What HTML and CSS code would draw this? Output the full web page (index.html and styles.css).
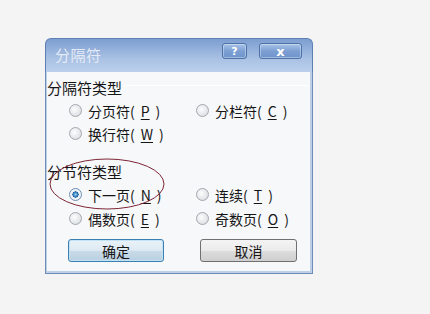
FILE: index.html
```html
<!DOCTYPE html>
<html lang="zh-CN">
<head>
    <meta charset="UTF-8">
    <title>分隔符</title>
    <link rel="stylesheet" href="styles.css">
</head>
<body>
    <div class="dialog">
        <div class="titlebar">
            <span class="title">分隔符</span>
            <div class="caption-buttons">
                <button class="cap-btn help">?</button>
                <button class="cap-btn close">x</button>
            </div>
        </div>

        <div class="dialog-body">
            <div class="group-title">
                <span>分隔符类型</span>
                <div class="group-line"></div>
            </div>
            <div class="radio-grid">
                <label class="radio"><span class="dot"></span>分页符(<u>P</u>)</label>
                <label class="radio"><span class="dot"></span>分栏符(<u>C</u>)</label>
                <label class="radio"><span class="dot"></span>换行符(<u>W</u>)</label>
            </div>

            <div class="group-title second">
                <span>分节符类型</span>
            </div>
            <div class="radio-grid tall">
                <label class="radio"><span class="dot checked"></span>下一页(<u>N</u>)</label>
                <label class="radio"><span class="dot"></span>连续(<u>T</u>)</label>
                <label class="radio"><span class="dot"></span>偶数页(<u>E</u>)</label>
                <label class="radio"><span class="dot"></span>奇数页(<u>O</u>)</label>
            </div>

            <div class="actions">
                <button class="btn default">确定</button>
                <button class="btn">取消</button>
            </div>

            <!-- hand-drawn annotation -->
            <svg class="mark" width="120" height="56" viewBox="0 0 120 56">
                <ellipse cx="60" cy="27" rx="57" ry="25" fill="none" stroke="#7e2636" stroke-width="1"/>
            </svg>
        </div>
    </div>
</body>
</html>
```

FILE: styles.css
```css
* {
    margin: 0;
    padding: 0;
    box-sizing: border-box;
}

body {
    font-family: "Noto Sans CJK SC", "Noto Sans", sans-serif;
    font-size: 14px;
    background: #f4f4f4;
    color: #151515;
    overflow: hidden;
}

.dialog {
    width: 268px;
    margin: 38px 0 0 45px;
}

.titlebar {
    height: 34px;
    display: flex;
    justify-content: space-between;
    align-items: flex-start;
    padding: 0 10px 0 9px;
    border: 1px solid #5d7fb3;
    border-bottom: none;
    border-radius: 6px 6px 0 0;
    background: linear-gradient(#7d9ed1, #a9c1e4 60%, #bcd0ec);
}

.title {
    color: #e4ebf6;
    font-size: 15px;
    line-height: 20px;
    margin-top: 6px;
    letter-spacing: 0.5px;
}

.caption-buttons {
    display: flex;
    gap: 12px;
    margin-top: 4px;
}

.cap-btn {
    height: 16px;
    border: 1px solid #4d72a8;
    border-radius: 3px;
    background: linear-gradient(#a9c3e8, #7c9fd3 50%, #6f94cc);
    color: #fff;
    font-family: "DejaVu Sans", sans-serif;
    font-weight: bold;
    font-size: 11px;
    line-height: 13px;
    box-shadow: inset 0 0 0 1px rgba(255, 255, 255, 0.35);
}

.cap-btn.help {
    width: 25px;
}

.cap-btn.close {
    width: 43px;
    font-size: 13px;
}

.dialog-body {
    position: relative;
    height: 202px;
    background: #f7f8fa;
    border: 1px solid #6d8db8;
    border-top: none;
    box-shadow: inset 1px 0 0 #bed0e8, inset -2px 0 0 #bed0e8, inset 0 -2px 0 #bed0e8;
    padding: 6px 0 0 1px;
}

.group-title {
    display: flex;
    align-items: flex-start;
    height: 20px;
    line-height: 20px;
    font-size: 15px;
}

.group-title.second {
    margin-top: 17px;
}

.group-line {
    flex: 1;
    height: 1px;
    margin: 7px 3px 0 2px;
    background: #d6d9de;
    border-bottom: 1px solid #fff;
}

.radio-grid {
    display: grid;
    grid-template-columns: 127px 127px;
    padding-left: 22px;
    margin-top: 1px;
}

.radio-grid.tall {
    row-gap: 1px;
}

.radio {
    display: flex;
    align-items: center;
    gap: 6px;
    height: 23px;
}

.radio u {
    text-decoration-thickness: 1px;
    text-underline-offset: 2px;
}

.dot {
    width: 13px;
    height: 13px;
    border-radius: 50%;
    border: 1px solid #a3a8ae;
    background: radial-gradient(circle at 40% 40%, #fdfdfd, #dfe2e6 70%, #cfd3d8);
    flex: none;
}

.dot.checked {
    border-color: #6c8fb3;
    background: radial-gradient(circle, #9fd4f5 0, #3b87c4 25%, #1d5e99 38%, #e8eef4 42%, #f3f6f9 70%, #d7dee6);
}

.actions {
    display: flex;
    gap: 36px;
    padding-left: 21px;
    margin-top: 9px;
}

.btn {
    width: 97px;
    height: 23px;
    font-family: "Noto Sans CJK SC", sans-serif;
    font-size: 14px;
    color: #151515;
    border: 1px solid #707070;
    border-radius: 3px;
    background: linear-gradient(#f4f4f4, #ebebeb 50%, #dddddd 51%, #cfcfcf);
}

.btn.default {
    width: 96px;
    border-color: #3c7fb1;
    background: linear-gradient(#e9f2f8, #dde9f2 50%, #c9dbe8 51%, #b9cfe0);
    box-shadow: inset 0 0 0 1px #c2e3f6;
}

.mark {
    position: absolute;
    left: 1px;
    top: 85px;
}
```
